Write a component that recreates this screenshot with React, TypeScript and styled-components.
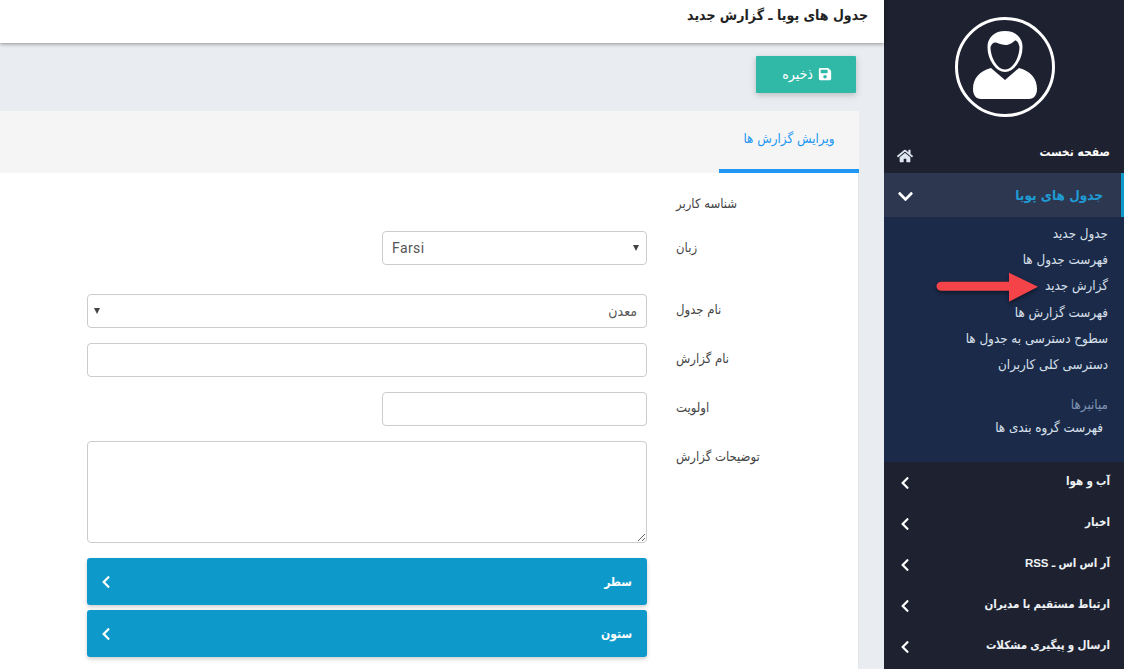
import React from 'react';
import styled, { createGlobalStyle } from 'styled-components';
import { FaChevronDown, FaChevronLeft, FaHome, FaSave } from 'react-icons/fa';

const Global = createGlobalStyle`
  html, body { margin: 0; padding: 0; background: #e9edf2; }
  * { box-sizing: border-box; }
`;
const FONT = `"DejaVu Sans Condensed", "DejaVu Sans", "Noto Sans", sans-serif`;

const Page = styled.div`
  position: relative; display: flex; width: 1124px; height: 669px; overflow: hidden;
  font-family: ${FONT}; background: #e9edf2;
`;
const Main = styled.main`flex: 1; min-width: 0; display: flex; flex-direction: column;`;
const Header = styled.header`
  height: 43px; flex: none; background: #fff; box-shadow: 0 1px 4px rgba(0,0,0,.4);
  direction: rtl; padding: 0 16px; display: flex; align-items: center;
  position: relative; z-index: 1;
`;
const Title = styled.h1`margin: 0 0 13px; font-size: 14px; line-height: 30px; font-weight: 700; color: #222;`;
const Toolbar = styled.div`
  height: 68px; flex: none; display: flex; justify-content: flex-end; align-items: flex-start;
  padding: 13px 28px 0 0;
`;
const SaveButton = styled.button`
  width: 100px; height: 37px; border: 0; border-radius: 1px; background: #31b9a8; color: #fff;
  font-family: ${FONT}; font-size: 14px; font-weight: 400; display: flex; align-items: center;
  justify-content: center; gap: 5px; direction: rtl; padding: 0 0 2px 2px;
  box-shadow: 0 2px 6px rgba(0,0,0,.22);
  flex-direction: row-reverse;
`;
const Card = styled.section`
  flex: 1; margin-right: 25px; background: #fff; display: flex; flex-direction: column;
  border-right: 1px solid #e3e5e8;
`;
const TabBar = styled.div`
  height: 62px; flex: none; background: #f5f5f5; display: flex; justify-content: flex-end;
  margin-right: -1px;
`;
const Tab = styled.div`
  width: 140px; border-bottom: 4px solid #2196f3; color: #2196f3; font-size: 13.300px;
  direction: rtl; text-align: center; line-height: 55px; white-space: nowrap;
`;
const Form = styled.form`display: flex; flex-direction: column; padding: 18px 0 0 87px;`;
const Row = styled.div<{ $after?: number }>`
  display: grid; grid-template-columns: 560px 1fr; column-gap: 29px; margin-bottom: ${p => p.$after ?? 15}px;
`;
const Label = styled.label<{ $h?: number }>`
  grid-column: 2; grid-row: 1; font-size: 13px; color: #444; direction: rtl; text-align: left;
  line-height: ${p => p.$h ?? 32}px; white-space: nowrap; unicode-bidi: plaintext;
`;
const Control = styled.div<{ $small?: boolean }>`
  grid-column: 1; grid-row: 1; justify-self: end; width: ${p => (p.$small ? 265 : 560)}px;
  height: 34px; border: 1px solid #ccc; border-radius: 4px; background: #fff; color: #555;
  display: flex; align-items: center; justify-content: space-between; padding: 0 7px 0 9px;
  font-size: 14px; position: relative;
`;
const Farsi = styled.span`font-family: Roboto, sans-serif; font-size: 14px; letter-spacing: .4px; color: #555;`;
const Persian = styled.span`font-size: 14px; color: #555; direction: rtl; margin-right: 2px;`;
const Caret = styled.span<{ $shift?: number }>`
  width: 0; height: 0; border-left: 3px solid transparent; border-right: 3px solid transparent;
  border-top: 6px solid #444; margin-left: ${p => p.$shift ?? 0}px;
`;
const Input = styled.input<{ $small?: boolean }>`
  grid-column: 1; grid-row: 1; justify-self: end; width: ${p => (p.$small ? 265 : 560)}px; height: 34px;
  border: 1px solid #ccc; border-radius: 4px; background: #fff; outline: none;
`;
const TextArea = styled.textarea`
  grid-column: 1; grid-row: 1; display: block; width: 560px; height: 102px; border: 1px solid #ccc;
  border-radius: 4px; background: #fff; outline: none; resize: vertical;
`;
const Accordion = styled.div`
  width: 560px; height: 47px; background: #0d9acb; border-radius: 3px; color: #fff; flex: none;
  display: flex; align-items: center; justify-content: space-between; padding: 0 15px 0 12px;
  box-shadow: 0 2px 4px rgba(0,0,0,.2); margin-bottom: 5px; direction: ltr;
  font-size: 12px; font-weight: 700; svg { font-size: 14px; }
`;
const Side = styled.aside`
  width: 240px; flex: none; background: #1e2230; color: #fff; direction: rtl; display: flex; flex-direction: column;
`;
const Avatar = styled.div`height: 135px; flex: none; padding: 17px 0 0 2px; display: flex; justify-content: center;`;
const HomeItem = styled.div`
  height: 38px; flex: none; display: flex; justify-content: space-between; align-items: center;
  padding: 0 14px 5px 13px; font-size: 12px; font-weight: 700; svg { font-size: 16px; margin-top: 9px; color: #dfe8f2; }
`;
const ActiveItem = styled.div`
  height: 44px; flex: none; background: #2d3750; border-right: 3px solid #0d9acb; display: flex;
  justify-content: space-between; align-items: center; padding: 0 18px 0 13px; color: #1f9bd4;
  font-size: 13.500px; font-weight: 700; svg { color: #fff; font-size: 17px; margin-top: 3px; }
`;
const SubMenu = styled.div`
  height: 245px; flex: none; background: #1b2a49; padding: 4px 16px 0 0; display: flex; flex-direction: column;
`;
const SubItem = styled.div<{ $inset?: number }>`
  height: 26.2px; line-height: 26px; font-size: 13.300px; color: #d9e1ec; white-space: nowrap;
  padding-right: ${p => p.$inset ?? 0}px;
`;
const SubHead = styled.div`
  margin-top: 14px; height: 23px; line-height: 25px; font-size: 13.300px; color: #7f93b2;
`;
const MenuItem = styled.div`
  height: 41px; flex: none; display: flex; justify-content: space-between; align-items: center;
  padding: 0 14px 0 14px; font-family: "Liberation Sans", ${FONT}; font-size: 11.500px; font-weight: 700; color: #eef1f5;
  span { margin-bottom: 3px; } svg { font-size: 14px; margin-top: 1px; color: #fff; }
`;
const MenuList = styled.nav`padding-top: 0; display: flex; flex-direction: column;`;
const Arrow = styled.svg`position: absolute; left: 930px; top: 266px; pointer-events: none;`;

const subItems = ['جدول جدید', 'فهرست جدول ها', 'گزارش جدید', 'فهرست گزارش ها', 'سطوح دسترسی به جدول ها', 'دسترسی کلی کاربران'];
const menuItems = ['آب و هوا', 'اخبار', 'آر اس اس ـ RSS', 'ارتباط مستقیم با مدیران', 'ارسال و پیگیری مشکلات'];

export default function App() {
  return (
    <Page>
      <Global />
      <Main>
        <Header><Title>جدول های پویا ـ گزارش جدید</Title></Header>
        <Toolbar>
          <SaveButton type="button"><span>ذخیره</span><FaSave size={14} /></SaveButton>
        </Toolbar>
        <Card>
          <TabBar><Tab>ویرایش گزارش ها</Tab></TabBar>
          <Form>
            <Row $after={14}><Label $h={26}>شناسه کاربر</Label></Row>
            <Row $after={29}>
              <Control $small><Farsi>Farsi</Farsi><Caret /></Control>
              <Label $h={34}>زبان</Label>
            </Row>
            <Row>
              <Control><Caret $shift={-3} /><Persian>معدن</Persian></Control>
              <Label>نام جدول</Label>
            </Row>
            <Row><Input /><Label>نام گزارش</Label></Row>
            <Row><Input $small /><Label>اولویت</Label></Row>
            <Row><TextArea /><Label>توضیحات گزارش</Label></Row>
            <Accordion><FaChevronLeft /><span>سطر</span></Accordion>
            <Accordion><FaChevronLeft /><span>ستون</span></Accordion>
          </Form>
        </Card>
      </Main>
      <Side>
        <Avatar>
          <svg width="100" height="100" viewBox="0 0 100 100">
            <circle cx="50" cy="50" r="48.500" fill="none" stroke="#fff" strokeWidth="3" />
            <path fill="#fff" d="M36 51l14 12 14-12c11 3 18 10 18 21 0 6-3 10-8 10H26c-5 0-8-4-8-10 0-11 7-18 18-21z" />
            <path fill="#fff" stroke="#1e2230" strokeWidth="2" d="M50 13c-11 0-18.500 7-18.500 17 0 13 8.500 26 18.500 26s18.500-13 18.500-26c0-10-7.500-17-18.500-17z" />
            <path fill="#1e2230" d="M35.500 30c1-3 3-5 5.500-4.500 4 1.500 8 3 11 2.500 3-.5 6-3 8.500-4.800 2 1 3.500 3.500 4 6.800 0 10-6.500 22.500-14.500 22.500S35.500 40 35.500 30z" />
          </svg>
        </Avatar>
        <HomeItem><span>صفحه نخست</span><FaHome /></HomeItem>
        <ActiveItem><span>جدول های پویا</span><FaChevronDown /></ActiveItem>
        <SubMenu>
          {subItems.map(t => <SubItem key={t}>{t}</SubItem>)}
          <SubHead>میانبرها</SubHead>
          <SubItem $inset={5}>فهرست گروه بندی ها</SubItem>
        </SubMenu>
        <MenuList>
          {menuItems.map(t => <MenuItem key={t}><span>{t}</span><FaChevronLeft /></MenuItem>)}
        </MenuList>
      </Side>
      <Arrow width="112" height="42" viewBox="0 0 112 42">
        <path fill="#f4444a" style={{ filter: 'drop-shadow(0 2px 2px rgba(0,0,0,.45))' }}
          d="M11 15.700H79V6.700L108 20.700 79 35.700V24.700H11c-6 0-6-9 0-9z" />
      </Arrow>
    </Page>
  );
}
